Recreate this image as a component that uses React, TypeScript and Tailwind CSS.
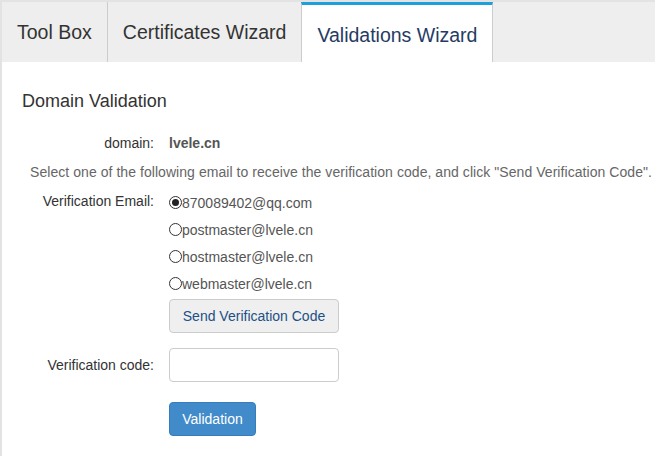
import React from "react"

const tabs = [
  { name: "Tool Box", active: false },
  { name: "Certificates Wizard", active: false },
  { name: "Validations Wizard", active: true },
]

const emails = ["870089402@qq.com", "postmaster@lvele.cn", "hostmaster@lvele.cn", "webmaster@lvele.cn"]

function Radio({ checked }: { checked: boolean }) {
  return (
    <span className="w-[13px] h-[13px] rounded-full border border-[#333] flex items-center justify-center shrink-0 bg-white">
      {checked && <span className="w-[7px] h-[7px] rounded-full bg-[#222]" />}
    </span>
  )
}

export default function App() {
  return (
    <div
      className="w-[655px] h-[456px] bg-white border-l-2 border-t-2 border-[#e3e3e3] overflow-hidden text-[14px] text-[#333]"
      style={{ fontFamily: '"Liberation Sans", Arial, sans-serif' }}
    >
      <div className="flex h-[60px] bg-[#eeeeee]">
        {tabs.map((t, i) => (
          <div
            key={t.name}
            className={
              t.active
                ? "h-full bg-white border-t-[3px] border-t-[#1e9fda] border-l border-r border-l-[#cccccc] border-r-[#cccccc] px-[15px] flex items-center text-[19.5px] text-[#263b63] pt-[4px]"
                : i === 0
                ? "h-full px-[15px] flex items-center text-[19.5px] text-[#333] pt-[2px]"
                : "h-full border-l border-[#cccccc] px-[15px] flex items-center text-[19.5px] text-[#333] pt-[2px]"
            }
          >
            {t.name}
          </div>
        ))}
      </div>

      <div className="pl-[20px]">
        <h4 className="mt-[29px] h-[20px] leading-[20px] text-[18px] text-[#333]">Domain Validation</h4>
      </div>

      <div className="grid grid-cols-[152px_1fr] gap-x-[15px] mt-[22px]">
        <div className="text-right h-[20px] leading-[20px]">domain:</div>
        <div className="h-[20px] leading-[20px] font-bold text-[#555]">lvele.cn</div>
      </div>

      <div className="pl-[28px] mt-[9px] h-[20px] leading-[20px] text-[#666] whitespace-nowrap tracking-[0.004em]">
        Select one of the following email to receive the verification code, and click "Send Verification Code".
      </div>

      <div className="grid grid-cols-[152px_1fr] gap-x-[15px] mt-[7px]">
        <div className="text-right h-[27px] leading-[27px] -mt-[1px]">Verification Email:</div>
        <div>
          {emails.map((e, i) => (
            <label key={e} className="flex items-center h-[27px] text-[#555]">
              <Radio checked={i === 0} />
              <span className="leading-[20px]">{e}</span>
            </label>
          ))}
          <button className="mt-[2px] w-[170px] h-[34px] bg-[#efefef] border border-[#cccccc] rounded-[4px] text-[#1d4f85] text-[14px]">
            Send Verification Code
          </button>
        </div>

        <div className="text-right h-[34px] leading-[34px] mt-[15px]">Verification code:</div>
        <div className="mt-[15px]">
          <input className="w-[170px] h-[34px] border border-[#cccccc] rounded-[4px] px-[12px] outline-none" />
        </div>

        <div />
        <div className="mt-[20px]">
          <button className="w-[87px] h-[34px] bg-[#428bca] border border-[#357ebd] rounded-[4px] text-white text-[14px]">
            Validation
          </button>
        </div>
      </div>
    </div>
  )
}
